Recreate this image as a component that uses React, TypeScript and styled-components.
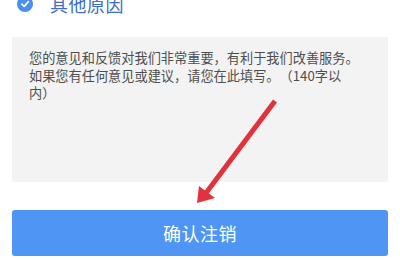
import styled, { createGlobalStyle } from 'styled-components';

const GlobalStyle = createGlobalStyle`
  html, body {
    margin: 0;
    padding: 0;
    background: #ffffff;
    font-family: "Noto Sans CJK SC", "Noto Sans", sans-serif;
  }
`;

const Page = styled.div`
  position: relative;
  width: 400px;
  height: 260px;
  overflow: hidden;
  background: #ffffff;
`;

const ReasonRow = styled.div`
  display: flex;
  align-items: center;
  gap: 17px;
  height: 24px;
  margin-top: -8px;
  padding-left: 17px;
`;

const Check = styled.span`
  display: flex;
  align-items: center;
  justify-content: center;
  width: 16px;
  height: 16px;
  border-radius: 50%;
  background: #4c8ef0;
`;

const ReasonText = styled.span`
  font-size: 18px;
  color: #3f6fc4;
  letter-spacing: 0.5px;
`;

const Feedback = styled.div`
  margin: 21px 12px 0;
  height: 145px;
  box-sizing: border-box;
  padding: 12px 26px 0 17px;
  background: #f3f3f3;
  border-radius: 2px;
  font-size: 13.2px;
  line-height: 17.5px;
  color: #4e4e4e;
  text-spacing-trim: space-all;
`;

const SubmitButton = styled.button`
  display: flex;
  align-items: center;
  justify-content: center;
  width: 376px;
  height: 46px;
  margin: 28px 12px 0;
  border: none;
  border-radius: 3px;
  background: #4f95f4;
  color: #ffffff;
  font-family: inherit;
  font-size: 18px;
  letter-spacing: 0.5px;
`;

const Arrow = styled.svg`
  position: absolute;
  left: 0;
  top: 0;
  pointer-events: none;
`;

function App(): JSX.Element {
  return (
    <Page>
      <GlobalStyle />
      <ReasonRow>
        <Check>
          <svg width="10" height="10" viewBox="0 0 10 10">
            <path d="M1.8 5.2 L4.2 7.4 L8.4 2.6" fill="none" stroke="#fff" strokeWidth="1.6" strokeLinecap="round" strokeLinejoin="round" />
          </svg>
        </Check>
        <ReasonText>其他原因</ReasonText>
      </ReasonRow>
      <Feedback>
        您的意见和反馈对我们非常重要，有利于我们改善服务。如果您有任何意见或建议，请您在此填写。（140字以内）
      </Feedback>
      <SubmitButton>确认注销</SubmitButton>
      <Arrow width="400" height="260" viewBox="0 0 400 260">
        <line x1="275" y1="101" x2="206" y2="193" stroke="#e1323d" strokeWidth="5" />
        <polygon points="197,203 199,186 215,198" fill="#e1323d" />
      </Arrow>
    </Page>
  );
}

export default App;
